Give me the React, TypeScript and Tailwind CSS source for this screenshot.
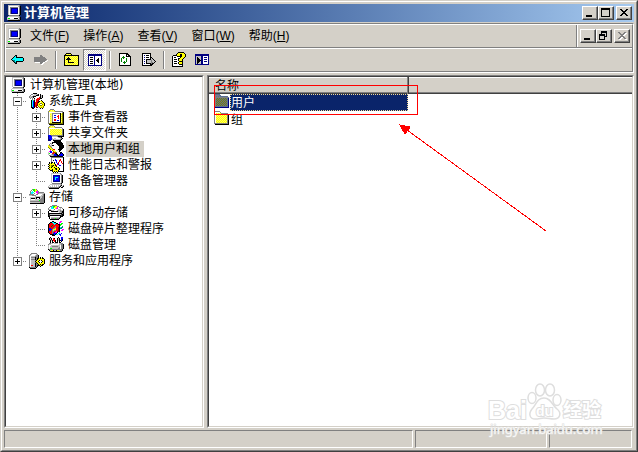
import { useState, type ReactNode } from "react";

const COLORS: Record<string, string> = {
  k: "#000000",
  w: "#ffffff",
  g: "#808080",
  s: "#404040",
  l: "#c0c0c0",
  b: "#0000ff",
  n: "#000080",
  y: "#ffff00",
  e: "#ffff66",
  o: "#808000",
  c: "#00ffff",
  t: "#008080",
  r: "#ff0000",
  d: "#800000",
  G: "#008000",
  L: "#00ff00",
  m: "#ff00ff",
  x: "#5a6f94",
};

// 16px pixel icons, one character per pixel
const SPRITES = {
  computer: [
    "..lllllllllllg..",
    "..lwwwwwwwwwlgk.",
    "..lwggggggggwgk.",
    "..lwgnnnnnnnwgk.",
    "..lwgnbbbbbnwgk.",
    "..lwgnbbbbbnwgk.",
    "..lwgnbbbbbnwgk.",
    "..lwgnbbbbbnwgk.",
    "..lwgnnnnnnnwgk.",
    "..lwwwwwwwwwwgk.",
    "...ggggggggggk..",
    "..lllllllllllg..",
    ".lwwwwwwwwwwlgk.",
    ".lLLwwwwkkkkwgk.",
    ".lllllllllllggk.",
    "..kkkkkkkkkkkk..",
  ],
  tools: [
    "....kkkk........",
    "..ggwlllgk.k....",
    ".gwwlllkkk.klk..",
    "gllgkkk....klk..",
    "glglk.....rklk..",
    ".g.gwk..rrrkk...",
    "...gwg.rrrd.....",
    "..kcgk.rrd..k...",
    "..kcbk.rrdkyyk..",
    "..kcbkrrdkywyyk.",
    "..kcbkrrdyyooyyk",
    "..kcbkrrdyo..oyk",
    "..kcbkrddyyooyyk",
    "..kcbkrd.oyyyyo.",
    "..kkbk.dd.oyoyo.",
    "...kk......k.k..",
  ],
  event: [
    "..gggg..........",
    ".gyeyeg.........",
    "gyeeeeygggggggg.",
    "gwwwwwwwwwwwwwgk",
    "gweeggggggggkeok",
    "gwyegwwwwwwwkyok",
    "gweegwbbwwrwkeok",
    "gwyegwwwwrrwkyok",
    "gweegwbbwwrwkeok",
    "gwyegwwwwwrwkyok",
    "gweegwrrwwwwkeok",
    "gwyegwrrwbbwkyok",
    "gweegwwwwwwwkeok",
    "gwyekkkkkkkkkyok",
    "gooooooooooooook",
    ".kkkkkkkkkkkkkkk",
  ],
  share: [
    "..gggg..........",
    ".gyeyeg.........",
    "gyeeeeyggggggg..",
    "gwwwwwwwwwwwwwg.",
    "gwyeyeyeyeyeyegk",
    "gweyeyeyeyeyeygk",
    "gwyeyeyeyeyeyegk",
    "gweyeyeyeyeyeygk",
    "gwyeyeyeyeyeyegk",
    "gweyeyeyeyeyeygk",
    "bbbggggggggggggk",
    "nbbblllllgkkkkkk",
    "nbbbwwwwwwlggk..",
    "nbbblwllwwwwlgk.",
    "nnbblgllllllgk..",
    "nnn..kkkkkkkk...",
  ],
  users: [
    "......kkkkkkk...",
    "....kkkkkkkkkk..",
    "..glkwwwkkkkkkk.",
    ".gwlwwwwwkkkkkk.",
    "ygllkkwwwwkkkkkk",
    "yyglwwwwwwwkkkkk",
    "oyygwwwwwwwkkkkk",
    ".oyygwwwwwwkkkk.",
    "..oyyrrwwwkkkk..",
    "..m.oyywwwwkk...",
    ".mbb.oyywwwk....",
    "lwbblrroowwwkk..",
    "lLwwrrgkkwwwkbk.",
    "lwwlggbbkkwkbbbk",
    ".ggllgbbbkkbbbbk",
    "..kkkkkkkkkkkkk.",
  ],
  logs: [
    "...ggggggggggggk",
    "...gwwwwwwwwwwwk",
    "...gwwwbwwwwrwwk",
    "...gwkwbbwwrrwwk",
    "...gwwwwbwwrwrwk",
    ".k.kkwkwbwrwwrwk",
    ".kykyykwwbrwwwrk",
    "kyyyyyykwrbwwwwk",
    ".kyookykrwwbbwwk",
    "kyyokyyykwwwwwwk",
    ".kykyykyyykwwwwk",
    "kyyyyyykkyykwwwk",
    ".kyykyyokyykwwwk",
    "..kkkyyyyykwwwwk",
    "....kykykykkkkkk",
    ".....k.k.k......",
  ],
  device: [
    "...lllllllllg...",
    "...lwwwwwwwwlg..",
    "...lwnnnnnnnwgk.",
    "...lwnbbbbbnwgk.",
    "...lwnbcccbnwgk.",
    "...lwnbcbbbnwgk.",
    "...lwnbcbbbnwgk.",
    "...lwnbbbbbnwgk.",
    "...lwnnnnnnnwgk.",
    "...lwwwwwwwwwgk.",
    "....gggggggggk..",
    "..lllllllllllg..",
    ".lwwlwlwlwlwgkwg",
    "lwlwlwlwlwlgk.gk",
    "gggggggggggk.kk.",
    ".kkkkkkkkkk.....",
  ],
  storage: [
    "...gLLyg........",
    "..gwLLyyg.......",
    ".gwcwLymmg......",
    ".gcccwwmmgggggg.",
    ".gccwgwwmglllllg",
    "gggggwwggwwwwlgk",
    "lllggggwwwwwllgk",
    "wwwwwwlllllllggk",
    "wllllllkkkkllggk",
    "wlkkkklkwwklgggk",
    "wlwwwwlllllggggk",
    "wlllllllllLggggk",
    "wggggggggggggggk",
    "wllllllllllggggk",
    ".kkkkkkkkkkkkkk.",
    "................",
  ],
  removable: [
    "....ggggg.......",
    "..ggcLLyygg.....",
    ".gwccLyyymwggg..",
    "gwwcccwymmwwlwg.",
    "gllwwwgwwwlllwwk",
    ".kkgllwwwlllgllk",
    "kwwkkkkkkkllggkk",
    "kwwwwwwwwwwllgkk",
    "kkkkkkkkkkkkkkgk",
    "kslllllllllllskk",
    "kskkkkkkkkkkkskk",
    "kkwwwwwwwwwwkkk.",
    ".kwllllllllgk...",
    ".kwggggLgggk....",
    "..kkkkkkkkk.....",
    "................",
  ],
  defrag: [
    "....kk......mm..",
    "..kkcckk...mm...",
    ".krrrccckk.m.LL.",
    "krrrrrcrrrkkLL..",
    "krrrGrrrrrrkL...",
    "krrGrrrgrrrk..t.",
    "krrrrrggrrdkctt.",
    "kbbrrggyrrdktt..",
    "kbbbgyyyrrdk..mm",
    "kbbrgyggrrdk.mm.",
    "krrrggrrmddk....",
    "krrrgrbmmk.c....",
    ".krrgbbbk.cc.b..",
    "..kkkkbkcc.bb...",
    "....kkk.....b...",
    "................",
  ],
  disk: [
    "..k.......k..bb.",
    ".klk.rk..klk.bb.",
    ".klk.rr..klk.bk.",
    "..klkrrk.klkkbk.",
    "..kwk.rk.kwk.k..",
    "..kwkkwkkkwkkw..",
    ".ggllwllllwllgg.",
    "gllwwwwwwwwllggk",
    "lwwlllllllllwggk",
    "lwllggggggllwggk",
    "lwlllllllllgwggk",
    "lwLLllllllggwggk",
    "kgggggggggggggk.",
    ".klyykllkyylggk.",
    "..kkkkkkkkkkkk..",
    "................",
  ],
  services: [
    "..gggggg........",
    ".glwwwwlg.......",
    "glwwwwlggk......",
    "gwllllgggk......",
    "gwggggkggk.k.k..",
    "gwllllkgkkykykk.",
    "gwggggkgkyyyyyyk",
    "gwllllgkyykwkyyk",
    "gwllllkyykwwwkyk",
    "gwllllgkyykwkyyk",
    "gwllllkgkyyyyyyk",
    "gwllllkggkykykk.",
    "gwrrllkgkkkykk..",
    "gwllllkgk..k....",
    "kggggggk........",
    ".kkkkkk.........",
  ],
  back: [
    "................",
    "................",
    "................",
    ".....kk.........",
    "....kck.........",
    "...kcckkkkkkk...",
    "..kcccccccccck..",
    ".kccccccccccck..",
    "..kttcccccccck..",
    "...ktckkkkkkk...",
    "....ktk.........",
    ".....kk.........",
    "................",
    "................",
    "................",
    "................",
  ],
  forward: [
    "................",
    "................",
    "................",
    ".......gg.......",
    ".......ggg......",
    ".ggggggggggg....",
    ".gggggggggggg...",
    ".ggggggggggggg..",
    ".gggggggggggg.w.",
    ".gggggggggggww..",
    "..wwwwwgggww....",
    ".......ggww.....",
    "........ww......",
    "................",
    "................",
    "................",
  ],
  up: [
    "................",
    "..kkkkk.........",
    ".kyeyeyk........",
    "kkkkkkkkkkkkkkk.",
    "kyeyeyeyeyeyeyk.",
    "keyekeyeyeyeyek.",
    "kyekkkeyeyeyeyk.",
    "kekkkkkeyeyeyek.",
    "kyeykyeyeyeyeyk.",
    "keyekeyeyeyeyek.",
    "kyeykkkkkkeyeyk.",
    "keyeyeyeyeyeyek.",
    "kyeyeyeyeyeyeyk.",
    "kkkkkkkkkkkkkkk.",
    "................",
    "................",
  ],
  treePane: [
    "................",
    "................",
    ".nnnnnnnnnnnnnn.",
    ".nnnnnnnnnnnnnn.",
    ".nwwwwwnwwwwwwn.",
    ".nwkkkwnwwwwwwn.",
    ".nwwwwwnwwwkwwn.",
    ".nwkkkwnwwkkwwn.",
    ".nwwwwwnwkkkwwn.",
    ".nwkkkwnwwkkwwn.",
    ".nwwwwwnwwwkwwn.",
    ".nwkkkwnwwwwwwn.",
    ".nwwwwwnwwwwwwn.",
    ".nnnnnnnnnnnnnn.",
    "................",
    "................",
  ],
  actionPane: [
    "................",
    "................",
    "nnnnnnnnnnnnnn..",
    "nnnnnnnnnnnnnn..",
    "nlllllnnwwwwwn..",
    "nlklllnnwnnnwn..",
    "nlkkllnnwwwwwn..",
    "nlkkklnnwnnnwn..",
    "nlkkkknnwwwwwn..",
    "nlkkklnnwnnnwn..",
    "nlkkllnnwwwwwn..",
    "nlklllnnwwwwwn..",
    "nnnnnnnnnnnnnn..",
    "................",
    "................",
    "................",
  ],
  refresh: [
    "................",
    ".kkkkkkkkk......",
    ".kwwwwwwkkk.....",
    ".kwwwwwwkwkk....",
    ".kwwwGwwkkkkk...",
    ".kwwGGGwwwwwk...",
    ".kwGwGwwGwwwk...",
    ".kwGwwwwGwwwk...",
    ".kwGwwwwGwwwk...",
    ".kwGwwGwGwwwk...",
    ".kwwwGGGwwwwk...",
    ".kwwwwGwwwwwk...",
    ".kwwwwwwwwwwk...",
    ".kkkkkkkkkkkk...",
    "................",
    "................",
  ],
  exportList: [
    "................",
    ".kkkkkkkkk......",
    ".kwwwwwwwk......",
    ".kwnwkkkwk......",
    ".kwwwwwwwk......",
    ".kwnwkkkwkk.....",
    ".kwwwwwwwklk....",
    ".kwnwkkkkkllk...",
    ".kwwwkllllgllk..",
    ".kwnwkllllglllk.",
    ".kwwwkllllgglk..",
    ".kwnwkkkkkgkk...",
    ".kwwwwwwwkkk....",
    ".kkkkkkkkkk.....",
    "................",
    "................",
  ],
  help: [
    "......kkkkkk....",
    ".....kyyyyyyk...",
    "....kyyykkyyyk..",
    ".kkkkyyykkyyyk..",
    "kwwwwkkkkkyyyk..",
    "kwkkwwwwkyyyk...",
    "kwwwwwkkyyyk....",
    "kwkkkwkyyyk.....",
    "kwwwwwkyyyk.....",
    "kwkkkwwkkkk.....",
    "kwwwwwkyyyk.....",
    "kwkkkwkyyyk.....",
    "kwwwwwwkkkk.....",
    "kwwwwwwwwwk.....",
    "kkkkkkkkkkk.....",
    "................",
  ],
  folder: [
    ".ggggg..........",
    "gwwwwwg.........",
    "gwyeyeyggggggg..",
    "gwwwwwwwwwwwwgk.",
    "gwyeyeyeyeyeygk.",
    "gweyeyeyeyeyegk.",
    "gwyeyeyeyeyeygk.",
    "gweyeyeyeyeyegk.",
    "gwyeyeyeyeyeygk.",
    "gweyeyeyeyeyegk.",
    "gwyeyeyeyeyeygk.",
    "gweyeyeyeyeyegk.",
    "ggggggggggggggk.",
    ".kkkkkkkkkkkkkk.",
    "................",
    "................",
  ],
  folderSelected: [
    ".xxxxx..........",
    "xggggxx.........",
    "xgxgxgxxxxxxxx..",
    "xgggggggggggggx.",
    "xgxoxoxoxoxoxxn.",
    "xgoxoxoxoxoxoxn.",
    "xgxoxoxoxoxoxxn.",
    "xgoxoxoxoxoxoxn.",
    "xgxoxoxoxoxoxxn.",
    "xgoxoxoxoxoxoxn.",
    "xgxoxoxoxoxoxxn.",
    "xgoxoxoxoxoxoxn.",
    "xxxxxxxxxxxxxxn.",
    ".nnnnnnnnnnnnnn.",
    "................",
    "................",
  ],
};

type IconName = keyof typeof SPRITES;

function Icon({ name }: { name: IconName }) {
  return (
    <svg viewBox="0 0 16 16" className="size-4 shrink-0" shapeRendering="crispEdges" aria-hidden="true">
      {SPRITES[name].map((row, y) =>
        [...row].map((c, x) => (c === "." ? null : <rect key={`${x}-${y}`} x={x} y={y} width="1" height="1" fill={COLORS[c]} />))
      )}
    </svg>
  );
}

const RAISED =
  "border border-t-white border-l-white border-r-[#404040] border-b-[#404040] bg-[#d4d0c8] shadow-[inset_-1px_-1px_0_#808080]";

function CaptionButton({ label, glyph, disabled }: { label: string; glyph: ReactNode; disabled?: boolean }) {
  return (
    <button aria-label={label} disabled={disabled} className={`flex h-3.5 w-4 items-center justify-center ${RAISED}`}>
      <svg viewBox="0 0 12 10" className="h-2.5 w-3 shrink-0" shapeRendering="crispEdges" fill="none">
        {glyph}
      </svg>
    </button>
  );
}

const X_PATH = "M2 1h2v1h1v1h2v-1h1v-1h2v1h-1v1h-1v1h-1v1h1v1h1v1h1v1h-2v-1h-1v-1h-2v1h-1v1h-2v-1h1v-1h1v-1h1v-1h-1v-1h-1v-1h-1z";
const MinGlyph = <path d="M2 7h6v2h-6z" fill="#000" />;
const MaxGlyph = <path fillRule="evenodd" d="M1 0h9v9h-9z M2 2v6h7v-6z" fill="#000" />;
const RestoreGlyph = <path fillRule="evenodd" d="M3 0h6v6h-2v3h-6v-6h2z M4 2v1h3v2h1v-3z M2 5v3h4v-3z" fill="#000" />;
const CloseGlyph = <path d={X_PATH} fill="#000" />;
const CloseOffGlyph = (
  <>
    <path d={X_PATH} fill="#fff" transform="translate(1 1)" />
    <path d={X_PATH} fill="#808080" />
  </>
);

const MENUS = [
  ["文件", "F"],
  ["操作", "A"],
  ["查看", "V"],
  ["窗口", "W"],
  ["帮助", "H"],
];

function ToolButton({ label, icon, pressed }: { label: string; icon: IconName; pressed?: boolean }) {
  return (
    <button
      aria-label={label}
      aria-pressed={pressed}
      className={`flex h-[22px] w-[23px] items-center justify-center ${
        pressed
          ? "border border-t-[#808080] border-l-[#808080] border-r-white border-b-white bg-[conic-gradient(#fff_25%,#d4d0c8_0_50%,#fff_0_75%,#d4d0c8_0)] bg-size-[2px_2px]"
          : ""
      }`}
    >
      <Icon name={icon} />
    </button>
  );
}

function ToolDivider() {
  return (
    <div className="flex w-2 justify-center py-0.5">
      <div className="w-0.5 border-l border-r border-l-[#808080] border-r-white" />
    </div>
  );
}

type Guide = "line" | "plus" | "minus" | "plusEnd" | "tee" | "end";

interface TreeNode {
  label: string;
  icon: IconName;
  guides: Guide[];
}

const TREE: TreeNode[] = [
  { label: "计算机管理(本地)", icon: "computer", guides: [] },
  { label: "系统工具", icon: "tools", guides: ["minus"] },
  { label: "事件查看器", icon: "event", guides: ["line", "plus"] },
  { label: "共享文件夹", icon: "share", guides: ["line", "plus"] },
  { label: "本地用户和组", icon: "users", guides: ["line", "plus"] },
  { label: "性能日志和警报", icon: "logs", guides: ["line", "plus"] },
  { label: "设备管理器", icon: "device", guides: ["line", "end"] },
  { label: "存储", icon: "storage", guides: ["minus"] },
  { label: "可移动存储", icon: "removable", guides: ["line", "plus"] },
  { label: "磁盘碎片整理程序", icon: "defrag", guides: ["line", "tee"] },
  { label: "磁盘管理", icon: "disk", guides: ["line", "end"] },
  { label: "服务和应用程序", icon: "services", guides: ["plusEnd"] },
];

function GuideCell({ kind }: { kind: Guide }) {
  const last = kind === "end" || kind === "plusEnd";
  const box = kind === "plus" || kind === "minus" || kind === "plusEnd";
  return (
    <svg viewBox="0 0 19 16" className="h-4 w-[19px] shrink-0" shapeRendering="crispEdges" aria-hidden="true">
      <path d={last ? "M9.5 0V9" : "M9.5 0V16"} stroke="#808080" strokeDasharray="1 1" />
      {kind !== "line" && <path d="M9 8.5H19" stroke="#808080" strokeDasharray="1 1" />}
      {box && (
        <>
          <rect x="5.5" y="4.5" width="8" height="8" fill="#fff" stroke="#808080" />
          <path d={kind === "minus" ? "M7 8.5h5" : "M7 8.5h5M9.5 6v5"} stroke="#000" />
        </>
      )}
    </svg>
  );
}

const SUNKEN = "border border-t-[#808080] border-l-[#808080] border-r-white border-b-white";
const SUNKEN_INNER = "border border-t-[#404040] border-l-[#404040] border-r-[#d4d0c8] border-b-[#d4d0c8] bg-white";

function Annotations() {
  return (
    <svg className="pointer-events-none absolute top-0 left-0 h-full w-full" shapeRendering="crispEdges" aria-hidden="true">
      <rect x="6.5" y="9.5" width="203" height="29" fill="none" stroke="#f00" />
      <path d="M338 155L199 54" stroke="#f00" />
      <path d="M192 49l10 2l-5 7z" fill="#f00" stroke="#f00" />
    </svg>
  );
}

function Watermark() {
  return (
    <svg viewBox="0 0 116 62" className="pointer-events-none absolute right-[35px] bottom-3 h-[62px] w-[116px]">
      <g fill="#fff" stroke="#dedede" strokeWidth="1.5">
        <ellipse cx="45" cy="20" rx="4" ry="5.5" />
        <ellipse cx="53" cy="12" rx="4.5" ry="6" />
        <ellipse cx="63" cy="12" rx="4.5" ry="6" />
        <ellipse cx="70" cy="22" rx="4" ry="5.5" />
        <path d="M57 20C50 20 49 27 45 31C41 36 43 41 48 41C52 41 54 40 57 40C61 40 63 41 67 41C73 41 75 35 70 31C65 27 64 20 57 20Z" />
      </g>
      <g className="font-bold" fill="#fff" stroke="#dedede" strokeWidth="2" paintOrder="stroke">
        <text x="1" y="41" fontSize="25" fontFamily="Liberation Sans, sans-serif">Bai</text>
        <text x="49" y="38" fontSize="14" fontFamily="Liberation Sans, sans-serif">du</text>
        <text x="76" y="39" fontSize="19" fontFamily="Noto Sans CJK SC, sans-serif">经验</text>
      </g>
      <text x="3" y="56" fontSize="13" fill="#f7f7f5" stroke="#dedede" strokeWidth="1" paintOrder="stroke" fontFamily="Noto Sans, sans-serif">
        jingyan.baidu.com
      </text>
    </svg>
  );
}

export default function App() {
  const [selected, setSelected] = useState("本地用户和组");

  return (
    <div className="h-screen border border-t-[#d4d0c8] border-l-[#d4d0c8] border-r-[#404040] border-b-[#404040] bg-[#d4d0c8] font-['DejaVu_Sans','Noto_Sans_CJK_SC',sans-serif] text-[12px] leading-4 text-black select-none">
      <div className="flex h-full flex-col border border-t-white border-l-white border-r-[#808080] border-b-[#808080] p-0.5">
        <header className="flex h-[18px] shrink-0 items-center bg-linear-to-r from-[#0a246a] to-[#a6caf0] px-0.5">
          <Icon name="computer" />
          <h1 className="ml-0.5 flex-1 text-[13px] font-bold text-white">计算机管理</h1>
          <div className="flex">
            <CaptionButton label="最小化" glyph={MinGlyph} />
            <CaptionButton label="最大化" glyph={MaxGlyph} />
            <div className="w-0.5" />
            <CaptionButton label="关闭" glyph={CloseGlyph} />
          </div>
        </header>

        <div className="mt-px shrink-0 border border-[#808080] border-r-white border-b-white">
          <div className="border border-t-white border-l-white border-r-[#808080] border-b-[#808080]">
            <div className="flex h-[22px]">
              <div className="flex flex-1 items-center">
                <Icon name="computer" />
                <nav className="flex pl-px font-['Liberation_Sans','Noto_Sans_CJK_SC',sans-serif]">
                  {MENUS.map(([name, key]) => (
                    <button key={key} className="px-[7px]">
                      {name}(<u>{key}</u>)
                    </button>
                  ))}
                </nav>
              </div>
              <div className="flex items-center border-l border-[#808080] pr-0.5 pl-px shadow-[inset_1px_0_0_#fff]">
                <div className="w-0.5" />
                <CaptionButton label="最小化子窗口" glyph={MinGlyph} />
                <CaptionButton label="还原子窗口" glyph={RestoreGlyph} />
                <div className="w-0.5" />
                <CaptionButton label="关闭子窗口" glyph={CloseOffGlyph} disabled />
              </div>
            </div>
            <div className="h-0.5 border-t border-b border-t-[#808080] border-b-white" />
            <div className="flex h-[22px]">
              <ToolButton label="后退" icon="back" />
              <ToolButton label="前进" icon="forward" />
              <ToolDivider />
              <ToolButton label="上一级" icon="up" />
              <ToolButton label="显示/隐藏控制台树" icon="treePane" pressed />
              <ToolDivider />
              <ToolButton label="刷新" icon="refresh" />
              <ToolButton label="导出列表" icon="exportList" />
              <ToolDivider />
              <ToolButton label="帮助" icon="help" />
              <ToolButton label="显示/隐藏操作窗格" icon="actionPane" />
            </div>
          </div>
        </div>

        <main className="mt-0.5 flex min-h-0 flex-1 gap-[3px]">
          <aside className={`w-[200px] shrink-0 ${SUNKEN}`}>
            <ul className={`h-full pl-0.5 ${SUNKEN_INNER}`}>
              {TREE.map((node) => (
                <li key={node.label} className="flex h-4">
                  {node.guides.map((g, i) => (
                    <GuideCell key={i} kind={g} />
                  ))}
                  <span className="flex w-[19px] shrink-0 justify-center">
                    <Icon name={node.icon} />
                  </span>
                  <button
                    onClick={() => setSelected(node.label)}
                    className={`ml-px pr-1 pl-0.5 whitespace-nowrap ${node.label === selected ? "bg-[#d4d0c8]" : ""}`}
                  >
                    {node.label}
                  </button>
                </li>
              ))}
            </ul>
          </aside>

          <section className={`relative min-w-0 flex-1 ${SUNKEN}`}>
            <div className={`h-full ${SUNKEN_INNER}`}>
              <table className="w-full table-fixed border-collapse">
                <thead>
                  <tr className="h-[17px] bg-[#d4d0c8] shadow-[inset_0_-1px_0_#404040,inset_0_-2px_0_#808080,inset_0_1px_0_#fff]">
                    <th className="w-[199px] border-r border-[#404040] p-0 pl-1.5 text-left font-normal shadow-[inset_-1px_0_0_#808080]">
                      名称
                    </th>
                    <th className="p-0" />
                  </tr>
                </thead>
                <tbody>
                  {["用户", "组"].map((name, i) => (
                    <tr key={name} className="h-[17px]">
                      <td className="p-0 pl-[5px]">
                        <div className="flex">
                          <Icon name={i === 0 ? "folderSelected" : "folder"} />
                          <span
                            className={
                              i === 0
                                ? "h-[17px] flex-1 border border-dotted border-[#f5db95] bg-[#0a246a] text-white"
                                : "h-[17px] flex-1 border border-transparent"
                            }
                          >
                            {name}
                          </span>
                        </div>
                      </td>
                      <td className="p-0" />
                    </tr>
                  ))}
                </tbody>
              </table>
            </div>
            <Annotations />
          </section>
        </main>

        <footer className="mt-0.5 flex h-[18px] shrink-0 gap-0.5 pr-0.5">
          <div className={`flex-1 ${SUNKEN}`} />
          <div className={`w-[132px] ${SUNKEN}`} />
          <div className={`w-[83px] ${SUNKEN}`} />
        </footer>
      </div>
      <Watermark />
    </div>
  );
}
